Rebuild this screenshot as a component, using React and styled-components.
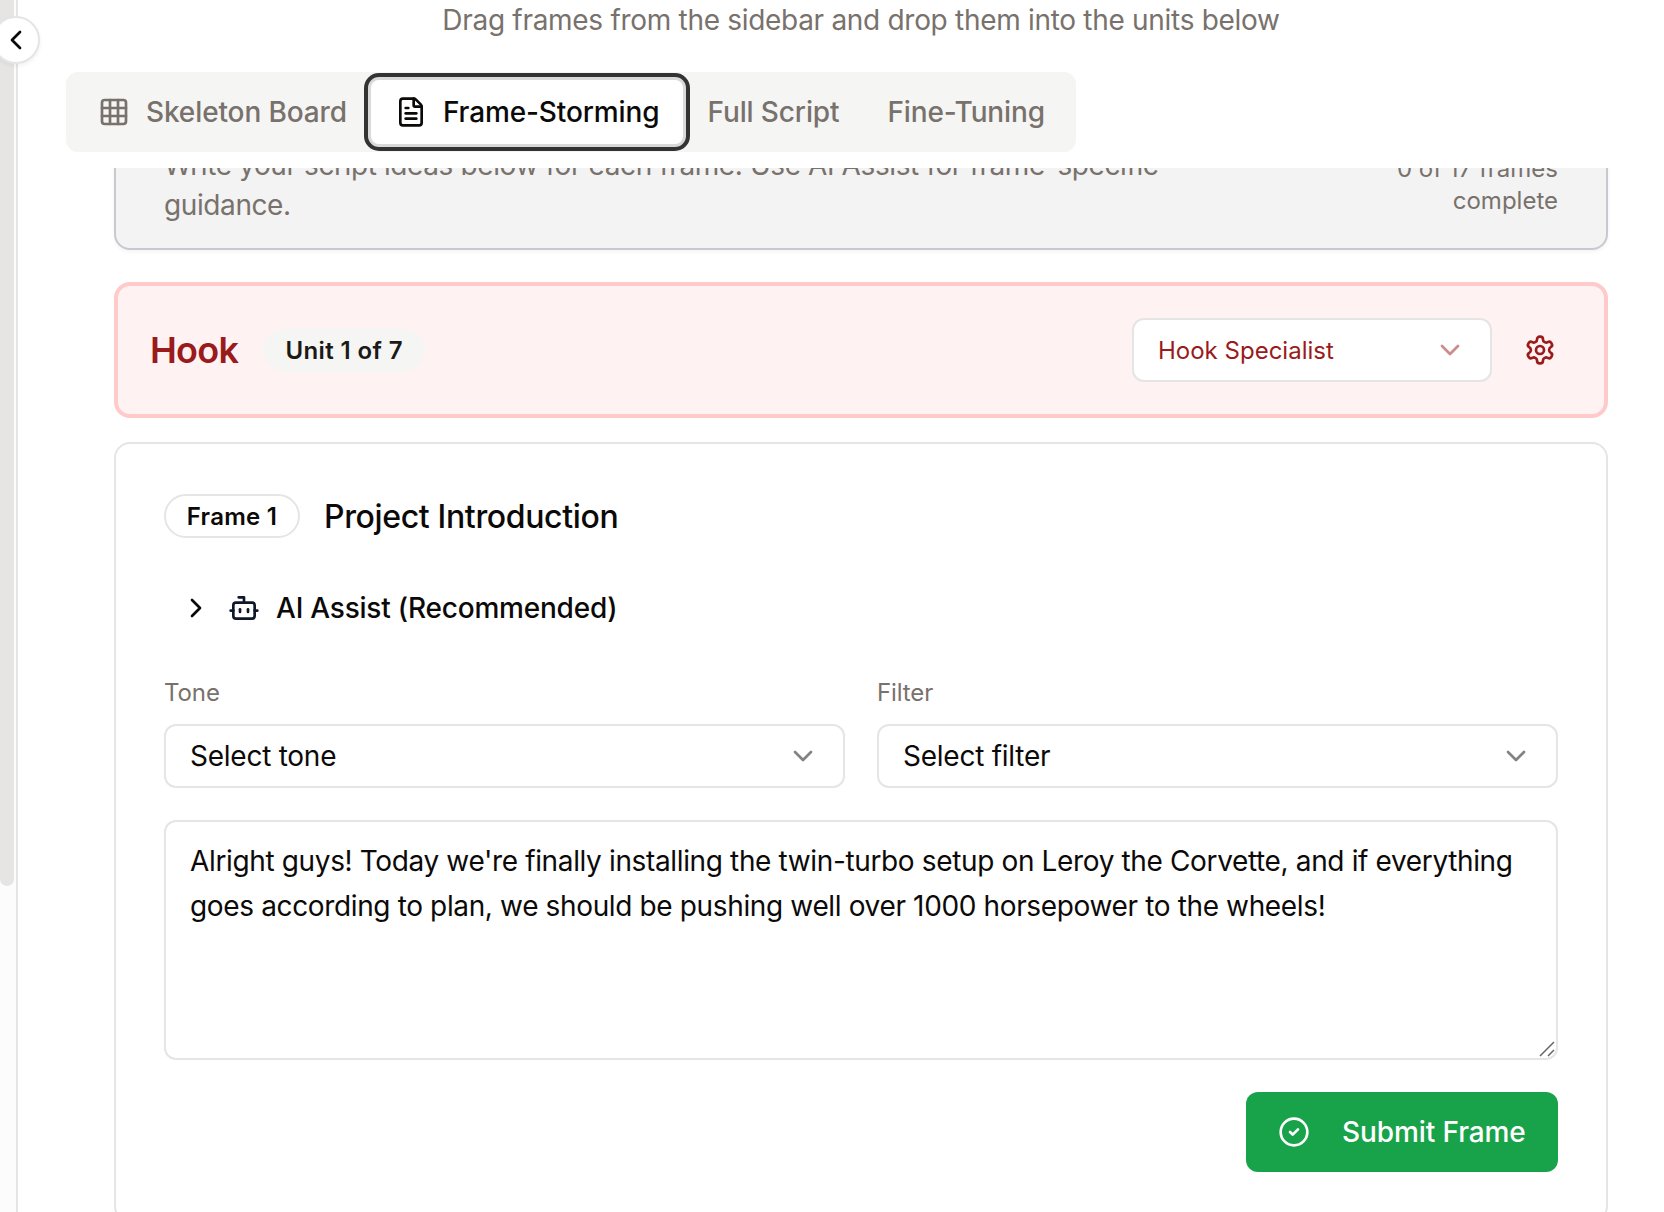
import React from "react";
import styled, { createGlobalStyle, css } from "styled-components";
import { ChevronLeft, ChevronRight, ChevronDown, Grid3x3, FileText, Bot, CircleCheck } from "lucide-react";

const Global = createGlobalStyle`
  *, *::before, *::after { box-sizing: border-box; }
  body { margin: 0; background: #fff; overflow: hidden; }
  button, textarea { font: inherit; color: inherit; letter-spacing: inherit; margin: 0; }
`;

const Page = styled.div`
  display: flex;
  width: 1664px;
  height: 1212px;
  overflow: hidden;
  font-family: Inter, "Liberation Sans", sans-serif;
  font-size: 28px;
  line-height: 40px;
  color: #0c0a09;
  background: #fff;
`;

const Sidebar = styled.aside`
  position: relative;
  flex: none;
  width: 18px;
  background: #fcfcfc;
  border-right: 2px solid #e5e5e5;
`;

const ScrollThumb = styled.div`
  width: 14px;
  height: 886px;
  background: #e7e5e4;
  border-radius: 0 0 7px 7px;
`;

const CollapseButton = styled.button`
  position: absolute;
  top: 16px;
  left: -8px;
  display: grid;
  place-items: center;
  width: 48px;
  height: 48px;
  padding: 0;
  border: 2px solid #e5e5e5;
  border-radius: 50%;
  background: #fff;
  box-shadow: 0 2px 4px rgba(0, 0, 0, 0.06);
`;

const Main = styled.main`
  flex: 1;
  min-width: 0;
  display: flex;
  flex-direction: column;
  padding: 0 8px 0 48px;
`;

const Hint = styled.p`
  margin: 0 0 32px;
  height: 40px;
  text-align: center;
  color: #78716c;
  letter-spacing: -0.3px;
`;

const TabList = styled.div`
  display: flex;
  align-self: flex-start;
  align-items: center;
  width: 1010px;
  height: 80px;
  padding: 8px;
  border-radius: 12px;
  background: #f5f5f4;
`;

const Tab = styled.button`
  display: flex;
  align-items: center;
  gap: 16px;
  height: 64px;
  padding: 0 24px;
  border: 0;
  border-radius: 8px;
  background: transparent;
  color: #78716c;
  font-weight: 500;
  letter-spacing: -0.12px;
  white-space: nowrap;
  ${(p) =>
    p.$active &&
    css`
      background: #fff;
      color: #0c0a09;
      box-shadow: 0 0 0 3px #d9d9d9, 0 0 0 7px #333;
    `}
`;

const ScrollArea = styled.div`
  flex: 1;
  min-height: 0;
  margin-top: 16px;
  padding: 0 48px;
  overflow: hidden;
`;

const Intro = styled.section`
  display: flex;
  justify-content: space-between;
  height: 208px;
  margin-top: -126px;
  padding: 101px 48px 0;
  border: 2px solid #c8c8d0;
  border-radius: 16px;
  background: #f3f3f3;
  box-shadow: 0 2px 4px rgba(0, 0, 0, 0.05);
  color: #78716c;
`;

const IntroText = styled.p`
  width: 1020px;
  margin: 0;
  letter-spacing: -0.4px;
`;

const Progress = styled.p`
  width: 180px;
  margin: 8px 0 0;
  font-size: 24px;
  line-height: 32px;
  text-align: right;
`;

const UnitHeader = styled.section`
  display: flex;
  align-items: center;
  height: 136px;
  margin-top: 32px;
  padding: 0 32px;
  border: 4px solid #fecaca;
  border-radius: 16px;
  background: #fef2f2;
  color: #991b1b;
`;

const UnitTitle = styled.h2`
  margin: 0 25px 0 0;
  font-size: 36px;
  font-weight: 600;
  line-height: 56px;
  letter-spacing: -0.75px;
`;

const Badge = styled.span`
  display: inline-flex;
  align-items: center;
  justify-content: center;
  width: ${(p) => p.$width}px;
  height: 44px;
  padding-top: 2px;
  border: 2px solid ${(p) => (p.$filled ? "transparent" : "#e5e5e5")};
  border-radius: 22px;
  background: ${(p) => (p.$filled ? "#f5f5f4" : "#fff")};
  color: ${(p) => (p.$filled ? "#1c1917" : "#0c0a09")};
  font-size: 24px;
  font-weight: 600;
  line-height: 32px;
  letter-spacing: ${(p) => (p.$filled ? 0.4 : 0.25)}px;
`;

const Select = styled.button`
  display: flex;
  align-items: center;
  justify-content: space-between;
  width: ${(p) => (p.$compact ? "360px" : "100%")};
  height: 64px;
  padding: 0 24px;
  border: 2px solid #e5e5e5;
  border-radius: 12px;
  background: #fff;
  font-size: ${(p) => (p.$compact ? 24 : 28)}px;
  letter-spacing: ${(p) => (p.$compact ? 0 : -0.25)}px;
  span { padding-top: ${(p) => (p.$compact ? 2 : 0)}px; }
  svg { opacity: 0.5; }
`;

const IconButton = styled.button`
  display: grid;
  place-items: center;
  width: 64px;
  height: 64px;
  padding: 0;
  border: 0;
  background: transparent;
`;

const UnitTools = styled.div`
  display: flex;
  gap: 16px;
  margin-left: auto;
`;

const FrameCard = styled.section`
  height: 780px;
  margin-top: 24px;
  padding: 50px 48px 48px;
  border: 2px solid #e4e4e9;
  border-radius: 16px;
  background: #fff;
`;

const FrameHead = styled.div`
  display: flex;
  align-items: center;
  gap: 24px;
  height: 44px;
`;

const FrameTitle = styled.h3`
  margin: 0;
  padding-top: 2px;
  font-size: 32px;
  font-weight: 500;
  line-height: 44px;
  letter-spacing: -0.35px;
`;

const Assist = styled.button`
  display: flex;
  align-items: center;
  height: 64px;
  margin-top: 38px;
  padding: 0 16px;
  border: 0;
  background: transparent;
  font-weight: 500;
  letter-spacing: -0.22px;
  svg { margin-right: 16px; }
`;

const Fields = styled.div`
  display: grid;
  grid-template-columns: 1fr 1fr;
  gap: 32px;
  margin-top: 36px;
`;

const Label = styled.label`
  display: block;
  padding-top: 1px;
  margin-bottom: 15px;
  font-size: 24px;
  line-height: 32px;
  color: #78716c;
  letter-spacing: -0.1px;
`;

const DraftBox = styled.div`
  position: relative;
  margin-top: 32px;
`;

const Draft = styled.textarea`
  display: block;
  width: 100%;
  height: 240px;
  padding: 17px 23px 17px 24px;
  border: 2px solid #e5e5e5;
  border-radius: 12px;
  background: #fff;
  line-height: 45px;
  letter-spacing: -0.36px;
  outline: none;
  resize: none;
`;

const Grip = styled.svg`
  position: absolute;
  right: 2px;
  bottom: 2px;
`;

const Actions = styled.div`
  display: flex;
  justify-content: flex-end;
  margin-top: 32px;
`;

const Submit = styled.button`
  display: flex;
  align-items: center;
  gap: 32px;
  width: 312px;
  height: 80px;
  padding: 0 32px;
  border: 0;
  border-radius: 12px;
  background: #18a34a;
  color: #fff;
  font-weight: 500;
  letter-spacing: -0.1px;
  white-space: nowrap;
`;

const draft =
  "Alright guys! Today we're finally installing the twin-turbo setup on Leroy the Corvette, and if everything goes according to plan, we should be pushing well over 1000 horsepower to the wheels!";

function Gear() {
  return (
    <svg width="32" height="32" viewBox="0 0 24 24" fill="none" stroke="currentColor" strokeWidth="2" strokeLinecap="round" strokeLinejoin="round">
      <path d="M12.22 2h-.44a2 2 0 0 0-2 2v.18a2 2 0 0 1-1 1.73l-.43.25a2 2 0 0 1-2 0l-.15-.08a2 2 0 0 0-2.73.73l-.22.38a2 2 0 0 0 .73 2.73l.15.1a2 2 0 0 1 1 1.72v.51a2 2 0 0 1-1 1.74l-.15.09a2 2 0 0 0-.73 2.73l.22.38a2 2 0 0 0 2.73.73l.15-.08a2 2 0 0 1 2 0l.43.25a2 2 0 0 1 1 1.73V20a2 2 0 0 0 2 2h.44a2 2 0 0 0 2-2v-.18a2 2 0 0 1 1-1.73l.43-.25a2 2 0 0 1 2 0l.15.08a2 2 0 0 0 2.73-.73l.22-.39a2 2 0 0 0-.73-2.73l-.15-.08a2 2 0 0 1-1-1.74v-.5a2 2 0 0 1 1-1.74l.15-.09a2 2 0 0 0 .73-2.73l-.22-.38a2 2 0 0 0-2.73-.73l-.15.08a2 2 0 0 1-2 0l-.43-.25a2 2 0 0 1-1-1.73V4a2 2 0 0 0-2-2z" />
      <circle cx="12" cy="12" r="3" />
    </svg>
  );
}

function Field({ label, value }) {
  return (
    <div>
      <Label>{label}</Label>
      <Select>
        <span>{value}</span>
        <ChevronDown size={32} />
      </Select>
    </div>
  );
}

export default function App() {
  return (
    <Page>
      <Global />
      <Sidebar>
        <ScrollThumb />
        <CollapseButton>
          <ChevronLeft size={32} />
        </CollapseButton>
      </Sidebar>
      <Main>
        <Hint>Drag frames from the sidebar and drop them into the units below</Hint>
        <TabList>
          <Tab>
            <Grid3x3 size={32} />
            Skeleton Board
          </Tab>
          <Tab $active>
            <FileText size={32} />
            Frame-Storming
          </Tab>
          <Tab>Full Script</Tab>
          <Tab>Fine-Tuning</Tab>
        </TabList>
        <ScrollArea>
          <Intro>
            <IntroText>
              Write your script ideas below for each frame. Use AI Assist for frame-specific guidance.
            </IntroText>
            <Progress>0 of 17 frames complete</Progress>
          </Intro>
          <UnitHeader>
            <UnitTitle>Hook</UnitTitle>
            <Badge $filled $width={162}>Unit 1 of 7</Badge>
            <UnitTools>
              <Select $compact>
                <span>Hook Specialist</span>
                <ChevronDown size={32} />
              </Select>
              <IconButton>
                <Gear />
              </IconButton>
            </UnitTools>
          </UnitHeader>
          <FrameCard>
            <FrameHead>
              <Badge $width={136}>Frame 1</Badge>
              <FrameTitle>Project Introduction</FrameTitle>
            </FrameHead>
            <Assist>
              <ChevronRight size={32} />
              <Bot size={32} color="#0f172a" />
              AI Assist (Recommended)
            </Assist>
            <Fields>
              <Field label="Tone" value="Select tone" />
              <Field label="Filter" value="Select filter" />
            </Fields>
            <DraftBox>
              <Draft defaultValue={draft} spellCheck={false} />
              <Grip width="18" height="18" viewBox="0 0 18 18" fill="none" stroke="#666" strokeWidth="1.5">
                <path d="M2 16 16 2M10 16l6-6" />
              </Grip>
            </DraftBox>
            <Actions>
              <Submit>
                <CircleCheck size={32} />
                Submit Frame
              </Submit>
            </Actions>
          </FrameCard>
        </ScrollArea>
      </Main>
    </Page>
  );
}
